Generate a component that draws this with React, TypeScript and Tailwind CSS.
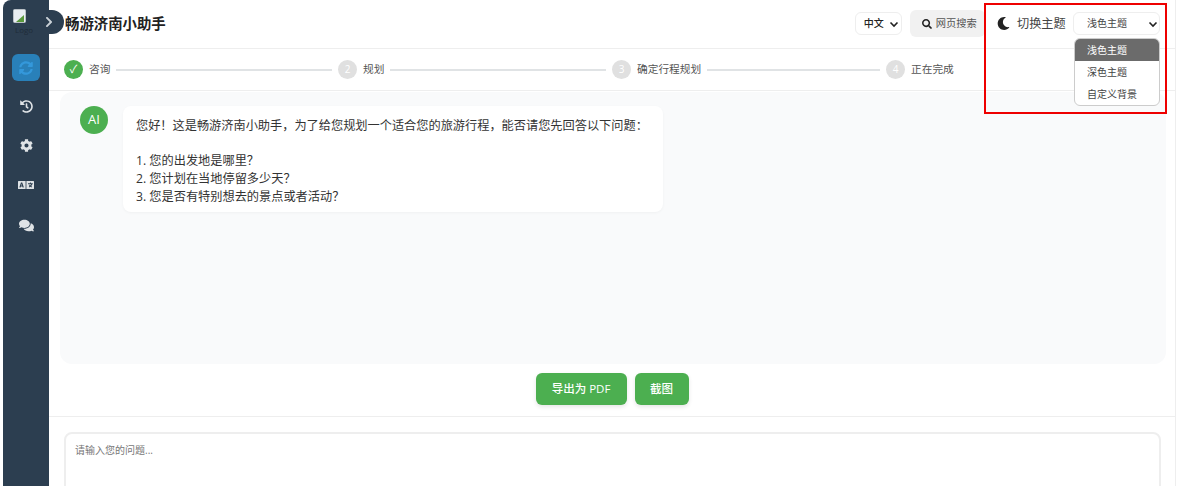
import React from 'react';
import { FaChevronRight, FaComments, FaCog, FaHistory, FaLanguage, FaMoon, FaSearch, FaSyncAlt } from 'react-icons/fa';

const steps = [
  { label: '咨询', done: true },
  { label: '规划', done: false },
  { label: '确定行程规划', done: false },
  { label: '正在完成', done: false },
];

const Chevron: React.FC = () => (
  <svg width="10" height="10" viewBox="0 0 10 10" fill="none" stroke="#222" strokeWidth="1.6">
    <path d="M1.5 3.5 5 7l3.5-3.5" />
  </svg>
);

const Sidebar: React.FC = () => (
  <aside className="relative ml-[3px] flex w-[46px] shrink-0 flex-col items-center rounded-tl-lg bg-[#2c3e50]">
    <div className="mt-[9px] h-[40px] w-full pl-[10px] text-[8px] leading-[10px] text-[#1f2c39]">
      <svg width="13" height="14" viewBox="0 0 13 14" className="block">
        <rect x="0.5" y="0.5" width="12" height="13" rx="1" fill="#e9eef2" stroke="#b9c0c6" />
        <path d="M3 13 11 6v7z" fill="#5b9a3d" />
      </svg>
      <span className="block pl-[2px] pt-[2px]">Logo</span>
    </div>
    <div className="mt-[5px] flex h-[27px] w-[28px] items-center justify-center rounded-md bg-[#2980b9] text-[#3498db]">
      <FaSyncAlt size={14} />
    </div>
    <div className="mt-[6px] flex flex-col items-center text-[#dfe3e6]">
      <div className="flex h-[39px] items-center"><FaHistory size={13} /></div>
      <div className="flex h-[39px] items-center"><FaCog size={13} /></div>
      <div className="flex h-[40px] items-center"><FaLanguage size={16} /></div>
      <div className="flex h-[40px] items-center"><FaComments size={15} /></div>
    </div>
    <div className="absolute left-[32px] top-[10px] flex h-[24px] w-[29px] items-center justify-end rounded-r-full bg-[#2c3e50] pr-[9px] text-[#cbd2d8]">
      <FaChevronRight size={12} />
    </div>
  </aside>
);

const Header: React.FC = () => (
  <header className="flex h-[49px] shrink-0 items-center border-b border-[#eeeeee] pb-[1px] pl-[16px]">
    <h1 className="text-[14.4px] font-bold text-[#222222]">畅游济南小助手</h1>
    <div className="ml-[689px] flex h-[23px] w-[47px] items-center justify-between rounded-md border border-[#eeeeee] pl-[8px] pr-[2px] text-[10px] font-medium text-[#222222]">
      中文
      <Chevron />
    </div>
    <div className="ml-[8px] flex h-[27px] w-[75px] items-center gap-[4px] rounded-md bg-[#f1f1f1] pl-[12px] text-[10.25px] text-[#555555]">
      <FaSearch size={10} className="text-[#222222]" />
      网页搜索
    </div>
  </header>
);

const Stepper: React.FC = () => (
  <div className="flex h-[42px] shrink-0 items-center border-b border-[#eeeeee] px-[15px]">
    {steps.map((step, i) => (
      <div key={step.label} className="flex flex-1 items-center">
        {step.done ? (
          <div className="flex h-[19px] w-[19px] items-center justify-center rounded-full bg-[#4caf50] text-[11px] text-white">✓</div>
        ) : (
          <div className="flex h-[19px] w-[19px] items-center justify-center rounded-full bg-[#e0e0e0] text-[10px] text-white">{i + 1}</div>
        )}
        <span className="ml-[6px] text-[10.7px] text-[#555555]">{step.label}</span>
        {i < steps.length - 1 && <div className="mx-[6px] h-[2px] flex-1 bg-[#e0e3e5]" />}
      </div>
    ))}
  </div>
);

const ThemeAnnotation: React.FC = () => (
  <div className="absolute left-[984px] top-[3px] h-[111px] w-[183px] border-2 border-[#ee0000]">
    <FaMoon size={13} className="absolute left-[11px] top-[12px] text-[#222222]" />
    <span className="absolute left-[31px] top-[10px] text-[12.2px] leading-[18px] text-[#444444]">切换主题</span>
    <div className="absolute left-[87px] top-[7px] flex h-[23px] w-[87px] items-center justify-between rounded-md border border-[#eeeeee] bg-white pl-[13px] pr-[1px] text-[10px] text-[#444444]">
      浅色主题
      <Chevron />
    </div>
    <div className="absolute left-[88px] top-[33px] w-[86px] overflow-hidden rounded-md border border-[#cccccc] bg-white text-[10px] leading-[22px] text-[#444444]">
      <div className="bg-[#6b6b6b] pl-[12px] text-white">浅色主题</div>
      <div className="pl-[12px]">深色主题</div>
      <div className="pl-[12px]">自定义背景</div>
    </div>
  </div>
);

const App: React.FC = () => (
  <div className="relative flex h-[486px] w-[1178px] overflow-hidden bg-white font-['Open_Sans','Noto_Sans_CJK_SC',sans-serif]">
    <Sidebar />
    <main className="mr-[2px] flex min-w-0 flex-1 flex-col border-r border-[#eeeeee]">
      <Header />
      <Stepper />
      <section className="ml-[11px] mr-[9px] mt-[1px] h-[272px] shrink-0 rounded-xl bg-[#f9fafb] pl-[20px] pt-[14px]">
        <div className="flex items-start gap-[15px]">
          <div className="flex h-[28px] w-[28px] items-center justify-center rounded-full bg-[#4caf50] text-[13px] text-white">AI</div>
          <div className="h-[106px] w-[540px] rounded-lg bg-white pl-[13px] pt-[11px] text-[12.2px] leading-[17.7px] text-[#333333] shadow-[0_1px_3px_rgba(0,0,0,0.04)]">
            <p>您好！这是畅游济南小助手，为了给您规划一个适合您的旅游行程，能否请您先回答以下问题：</p>
            <br />
            <p>1. 您的出发地是哪里？</p>
            <p>2. 您计划在当地停留多少天？</p>
            <p>3. 您是否有特别想去的景点或者活动？</p>
          </div>
        </div>
      </section>
      <div className="flex h-[53px] shrink-0 items-start justify-center gap-[8px] border-b border-[#eeeeee] pt-[9px]">
        <button className="h-[32px] w-[91px] rounded-md bg-[#4caf50] text-[11.5px] font-medium text-white shadow-[0_2px_4px_rgba(0,0,0,0.1)]">导出为 PDF</button>
        <button className="h-[32px] w-[54px] rounded-md bg-[#4caf50] text-[11.5px] font-medium text-white shadow-[0_2px_4px_rgba(0,0,0,0.1)]">截图</button>
      </div>
      <div className="pl-[15px] pr-[14px] pt-[15px]">
        <div className="h-[80px] rounded-lg border-2 border-[#eeeeee] pl-[9px] pt-[8px] text-[10px] leading-[16px] text-[#777777]">请输入您的问题...</div>
      </div>
    </main>
    <ThemeAnnotation />
  </div>
);

export default App;
